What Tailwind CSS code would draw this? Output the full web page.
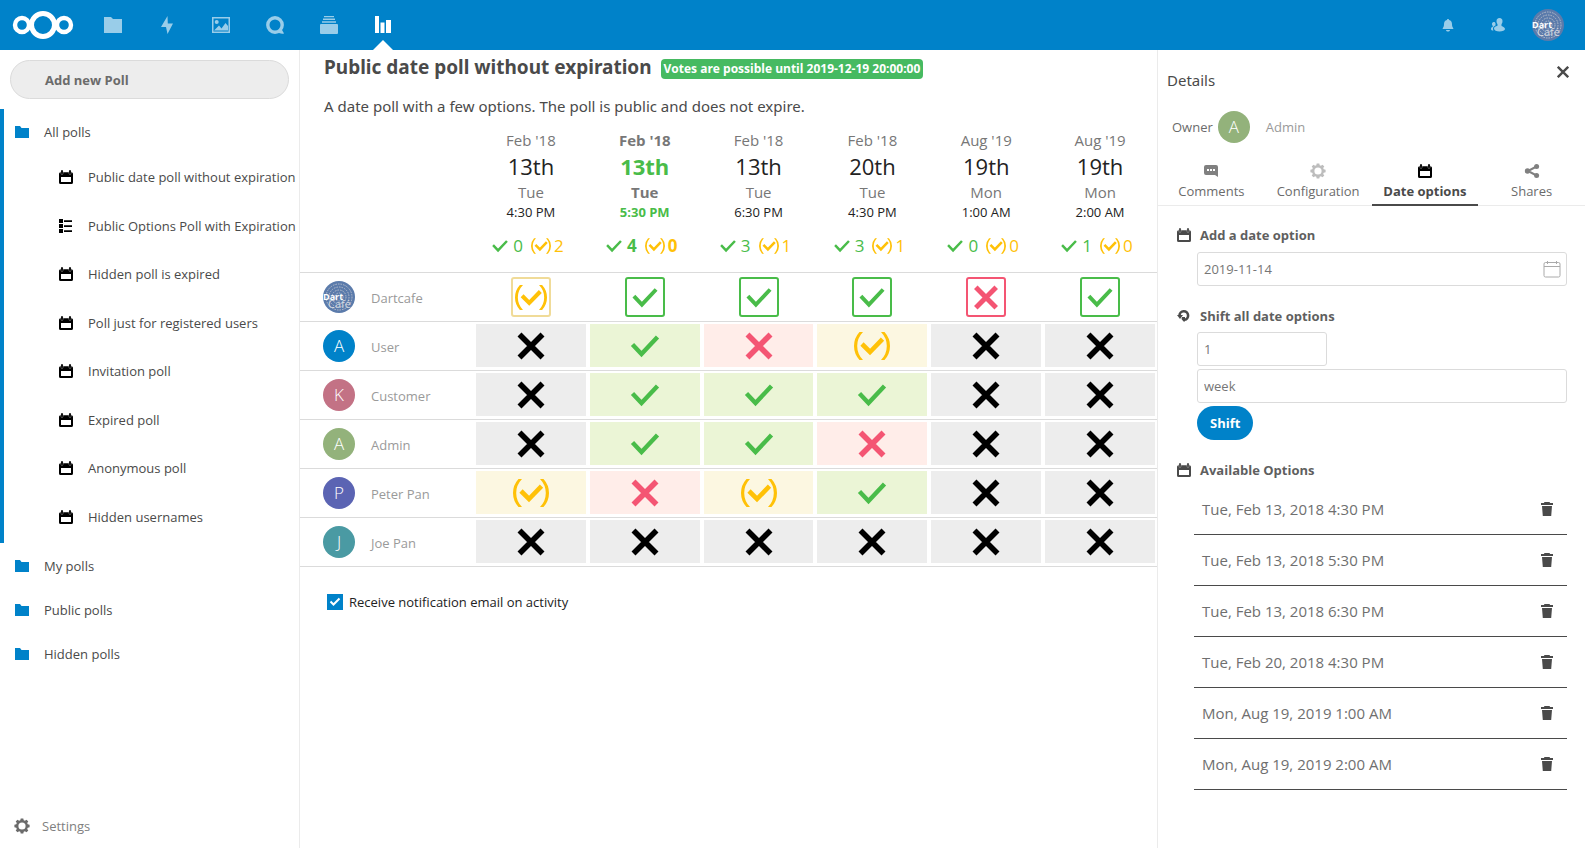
<!DOCTYPE html>
<html lang="en">
<head>
<meta charset="utf-8">
<title>Polls</title>
<script src="https://cdn.jsdelivr.net/npm/@tailwindcss/browser@4"></script>
</head>
<body class="flex min-h-screen flex-col bg-white font-['Open_Sans',sans-serif] text-[13px] leading-5 text-[#4a4a4a]">
<svg class="hidden" aria-hidden="true">
  <symbol id="folder" viewBox="0 0 16 16"><path d="M1 2h5l1.500 2H15v10H1z"/></symbol>
  <symbol id="cal" viewBox="0 0 14 14"><path fill-rule="evenodd" d="M1.600 2.200h10.800Q14 2.200 14 3.800V12.400Q14 14 12.400 14H1.600Q0 14 0 12.400V3.800Q0 2.200 1.600 2.200zM2 7v5h10V7z"/><path fill="none" stroke="#bbb" stroke-width="2.600" stroke-linecap="round" d="M3 1.700v1.600M11 1.700v1.600"/><path fill="none" stroke="currentColor" stroke-width="1.800" stroke-linecap="round" d="M3 1v2.300M11 1v2.300"/></symbol>
  <symbol id="list" viewBox="0 0 14 14"><path d="M0 0h4v4H0zM0 5h4v4H0zM0 10h4v4H0zM5 1.200h8v1.800H5zM5 6.200h8V8H5zM5 11.200h8V13H5z"/></symbol>
  <symbol id="gear" viewBox="0 0 16 16"><path fill-rule="evenodd" d="M6.700.4h2.600l.4 1.900 1.200.5 1.600-1.100 1.800 1.800-1.100 1.600.5 1.200 1.900.4v2.600l-1.900.4-.5 1.200 1.100 1.600-1.800 1.800-1.600-1.100-1.200.5-.4 1.900H6.700l-.4-1.900-1.200-.5-1.600 1.100-1.800-1.800 1.100-1.600-.5-1.200-1.900-.4V6.700l1.900-.4.500-1.200-1.100-1.600 1.800-1.800 1.600 1.100 1.200-.5zM8 4.400a3.600 3.600 0 1 0 0 7.200 3.600 3.600 0 0 0 0-7.200z"/></symbol>
  <symbol id="yes" viewBox="0 0 36 28"><path fill="none" stroke="currentColor" stroke-width="4.400" d="M5.500 12.500l9 9.500L30.500 5"/></symbol>
  <symbol id="no" viewBox="0 0 36 28"><path fill="none" stroke="currentColor" stroke-width="5.600" d="M6.500 2.500l23 23M29.500 2.500l-23 23"/></symbol>
  <symbol id="maybe" viewBox="0 0 36 28"><path fill="none" stroke="currentColor" stroke-width="4.600" d="M8 12l8 8L28.500 7.200"/><path d="M5.500 0H9Q3.200 6 3.200 14T9 28H5.500Q0 22 0 14T5.500 0zM30.500 0H27q5.800 6 5.800 14T27 28h3.500Q36 22 36 14T30.500 0z"/></symbol>
  <symbol id="trash" viewBox="0 0 14 14"><path d="M4.500 0h5l.6 1H13v2H1V1h2.900zM2 4h10l-.8 10H2.800z"/></symbol>
  <symbol id="dart" viewBox="0 0 32 32">
    <circle cx="16" cy="16" r="16" fill="#5b7bab"/>
    <g fill="none" stroke="#b4bccb" stroke-width="1" stroke-dasharray="1.600 1"><circle cx="16" cy="16" r="13"/><circle cx="16" cy="16" r="10"/><circle cx="16" cy="16" r="7"/><circle cx="16" cy="16" r="4"/></g>
    <text x="0" y="19" font-size="9" font-weight="700" fill="#fff">Dart</text>
    <text x="5" y="27" font-size="11" fill="#d5d9e0" font-weight="400">Café</text>
  </symbol>
</svg>

<header class="flex h-[50px] items-center bg-[#0082c9] text-white">
  <a href="#" aria-label="Home" class="ml-3 mr-3">
    <svg class="h-7 w-[62px]" viewBox="0 0 62 28" fill="none" stroke="currentColor"><circle cx="31" cy="14" r="11.500" stroke-width="5"/><circle cx="10" cy="14" r="7" stroke-width="4.400"/><circle cx="52" cy="14" r="7" stroke-width="4.400"/></svg>
  </a>
  <nav class="flex h-full items-center" aria-label="Apps">
    <a href="#" aria-label="Files" class="flex h-full w-[54px] items-center justify-center opacity-60"><svg class="size-5" viewBox="0 0 20 20" fill="currentColor"><path d="M1 2h7l2 2h9v14H1z"/></svg></a>
    <a href="#" aria-label="Activity" class="flex h-full w-[54px] items-center justify-center opacity-60"><svg class="size-5" viewBox="0 0 20 20" fill="currentColor"><path d="M10.500 1L4 12h5L10.500 19 16 8.500h-5.200z"/></svg></a>
    <a href="#" aria-label="Photos" class="flex h-full w-[54px] items-center justify-center opacity-60"><svg class="size-5" viewBox="0 0 20 20" fill="currentColor"><path fill-rule="evenodd" d="M1 2h18v16H1zM2.500 3.500v13h15v-13z"/><circle cx="5.700" cy="7" r="2"/><path d="M3 15.500l5-5 2.500 3 4-5.500 2.500 3v4.500z"/></svg></a>
    <a href="#" aria-label="Talk" class="flex h-full w-[54px] items-center justify-center opacity-60"><svg class="size-5" viewBox="0 0 20 20"><circle cx="10" cy="10" r="7.200" fill="none" stroke="currentColor" stroke-width="3.400"/><path fill="currentColor" d="M12 17l4-4 3 5.500q-3 1-7-1.500z"/></svg></a>
    <a href="#" aria-label="Deck" class="flex h-full w-[54px] items-center justify-center opacity-60"><svg class="size-5" viewBox="0 0 20 20" fill="currentColor"><path d="M5 1h10v1.300H5zM4 3.600h12v1.400H4zM3 6.300h14v1.500H3z"/><rect x="1" y="9" width="18" height="10" rx="1"/></svg></a>
    <a href="#" aria-label="Polls" aria-current="page" class="relative flex h-full w-[54px] items-center justify-center"><svg class="size-5" viewBox="0 0 20 20" fill="currentColor"><path d="M2 1h4v17H2zM7.500 7.500h4V18h-4zM13 5h5v13h-5z"/></svg>
      <svg class="absolute bottom-0 left-[17px] h-[10px] w-5" viewBox="0 0 20 10" fill="#fff"><path d="M10 0l10 10H0z"/></svg></a>
  </nav>
  <div class="ml-auto mr-[21px] flex items-center">
    <button aria-label="Notifications" class="flex w-[50px] justify-center opacity-60"><svg class="size-4" viewBox="0 0 16 16" fill="currentColor"><path d="M8 2c-.8 0-1 .5-1 1-2.200.5-3 2.300-3 4.300C4 10 3 10.500 2.500 12h11C13 10.500 12 10 12 7.300 12 5.300 11.200 3.500 9 3c0-.5-.2-1-1-1zM6 13c.2 1 1 1.500 2 1.500s1.800-.5 2-1.500z"/></svg></button>
    <button aria-label="Contacts" class="flex w-[50px] justify-center opacity-60"><svg class="size-4" viewBox="0 0 16 16" fill="currentColor"><path d="M9.500 1C7.500 1 6.500 2.400 6.500 4c0 1.500.5 2.500 1 3.200v1.600C5.500 9.600 4 10 4 11.500c0 2 2.500 3 5.500 3s5.500-1 5.500-2.500-2-2.200-3.500-3V7.200c.6-.7 1-1.700 1-3.200 0-1.600-1-3-3-3z"/><path d="M3.700 5C2.500 5 2 6 2 7s.4 1.500.8 2v.8C1.500 10.300 1 10.800 1 12c0 1 1 1.500 2.500 1.600C3 12.800 3 12 3 11.500c0-1.500 1-2.300 2.500-3V6.200C5.200 5.500 4.600 5 3.700 5z"/></svg></button>
    <button aria-label="Account" class="ml-[9px]"><svg class="size-8"><use href="#dart"/></svg></button>
  </div>
</header>

<div class="flex flex-1">
  <aside class="flex w-[300px] shrink-0 flex-col border-r border-[#ebebeb]">
    <button class="mx-[10px] mt-[10px] h-[39px] rounded-full border border-[#dbdbdb] bg-[#ededed] pl-[34px] text-left font-bold text-[#6b6b6b]">Add new Poll</button>
    <nav class="mt-[10px]" aria-label="Polls">
      <div class="border-l-4 border-[#0082c9]">
        <a href="#" class="flex h-11 items-center gap-[14px] pl-[10px] pt-px"><svg class="size-4 fill-[#0082c9]"><use href="#folder"/></svg>All polls</a>
        <ul id="polls" class="grid h-[390px] auto-rows-fr pb-[2px]"></ul>
      </div>
      <a href="#" class="flex h-11 items-center gap-[14px] pl-[14px] pt-px"><svg class="size-4 fill-[#0082c9]"><use href="#folder"/></svg>My polls</a>
      <a href="#" class="flex h-11 items-center gap-[14px] pl-[14px] pt-px"><svg class="size-4 fill-[#0082c9]"><use href="#folder"/></svg>Public polls</a>
      <a href="#" class="flex h-11 items-center gap-[14px] pl-[14px] pt-px"><svg class="size-4 fill-[#0082c9]"><use href="#folder"/></svg>Hidden polls</a>
    </nav>
    <button class="mt-auto flex h-11 items-center gap-3 pl-[14px] text-[#808080]"><svg class="size-4 fill-[#6b6b6b]"><use href="#gear"/></svg>Settings</button>
  </aside>

  <main class="min-w-0 flex-1">
    <div class="flex items-center gap-[9px] pl-6 pt-[5px]">
      <h1 class="font-['Noto_Sans',sans-serif] text-[19px] font-bold leading-6">Public date poll without expiration</h1>
      <span class="mt-1 h-5 rounded-sm bg-[#46ba61] px-[3px] text-[12px] font-bold leading-5 text-white">Votes are possible until 2019-12-19 20:00:00</span>
    </div>
    <p class="mt-[15px] pl-6 font-['Noto_Sans',sans-serif] text-[15px] leading-6">A date poll with a few options. The poll is public and does not expire.</p>
    <table class="mt-[10px] w-full table-fixed border-collapse">
      <thead><tr id="dates" class="border-b border-[#dbdbdb]"><td class="w-[174px]"></td></tr></thead>
      <tbody id="votes"></tbody>
    </table>
    <div class="flex items-center gap-[6px] pl-[27px] pt-[25px] text-[#222]">
      <span class="relative flex size-4">
        <input id="notify" type="checkbox" checked class="size-4 appearance-none bg-[#0082c9]">
        <svg class="pointer-events-none absolute inset-0 size-4 text-white" viewBox="0 0 16 16"><path fill="none" stroke="currentColor" stroke-width="2" d="M3.500 7.500l3 3 6-6"/></svg>
      </span>
      <label for="notify">Receive notification email on activity</label>
    </div>
  </main>

  <aside class="w-[428px] shrink-0 border-l border-[#ebebeb]">
    <div class="flex items-start justify-between pl-[9px] pr-4 pt-4">
      <h2 class="pt-[2px] font-['Noto_Sans',sans-serif] text-[15px] leading-6">Details</h2>
      <button aria-label="Close" class="text-[#4a4a4a]"><svg class="size-3" viewBox="0 0 12 12"><path fill="none" stroke="currentColor" stroke-width="2.400" d="M.8.8l10.400 10.400M11.200.8L.8 11.200"/></svg></button>
    </div>
    <div class="mt-[19px] flex items-center pl-[14px]">
      <span class="text-[#6b6b6b]">Owner</span>
      <span class="ml-[5px] flex size-8 items-center justify-center rounded-full bg-[#93b27b] text-[17px] font-light text-white">A</span>
      <span class="ml-4 text-[#9a9a9a]">Admin</span>
    </div>
    <div role="tablist" class="mt-5 grid grid-cols-4 border-b border-[#ebebeb] text-[#6b6b6b]">
      <button role="tab" class="flex flex-col items-center gap-[2px] pb-[3px]"><svg class="size-4 text-[#808080]" viewBox="0 0 16 16" fill="currentColor"><path fill-rule="evenodd" d="M3 2h10q2 0 2 2v10l-3-2H3q-2 0-2-2V4q0-2 2-2zM4 6v2h2V6zM7 6v2h2V6zM10 6v2h2V6z"/></svg>Comments</button>
      <button role="tab" class="flex flex-col items-center gap-[2px] pb-[3px]"><svg class="size-4 fill-[#bdbdbd]"><use href="#gear"/></svg>Configuration</button>
      <button role="tab" aria-selected="true" class="-mb-px flex flex-col items-center gap-[2px] border-b-2 border-[#4a4a4a] pb-[3px] font-bold text-[#4a4a4a]"><svg class="m-px size-[14px] fill-black text-black"><use href="#cal"/></svg>Date options</button>
      <button role="tab" class="flex flex-col items-center gap-[2px] pb-[3px]"><svg class="size-4 text-[#808080]" viewBox="0 0 16 16" fill="currentColor"><path fill="none" stroke="currentColor" stroke-width="2" d="M12.500 3.500L4 8l8.500 4.500"/><circle cx="12.600" cy="3.400" r="2.500"/><circle cx="3.500" cy="8" r="2.700"/><circle cx="12.600" cy="12.600" r="2.500"/></svg>Shares</button>
    </div>
    <section class="pl-[39px] pr-[18px] pt-[19px]">
      <label for="date" class="-ml-5 flex items-center gap-[9px] font-bold text-[#5f5f5f]"><svg class="size-[14px] fill-[#4a4a4a] text-[#4a4a4a]"><use href="#cal"/></svg>Add a date option</label>
      <div class="relative mt-[7px]">
        <input id="date" type="text" value="2019-11-14" class="h-[34px] w-full rounded-[3px] border border-[#dbdbdb] px-[6px] text-[#767676]">
        <svg class="pointer-events-none absolute right-[6px] top-2 h-[18px] w-[18px]" viewBox="0 0 18 18" fill="none" stroke="#aaa"><rect x="1" y="2.500" width="16" height="14.500" rx="1.500"/><path d="M1 6.500h16M4.500 1v3M13.500 1v3"/></svg>
      </div>
      <label for="amount" class="-ml-5 mt-5 flex items-center gap-[9px] font-bold text-[#5f5f5f]"><svg class="size-[14px]" viewBox="0 0 14 14" fill="none" stroke="#4a4a4a"><path stroke-width="2.600" d="M2.500 6.500a4.300 4.300 0 1 1 5 4.300"/><path fill="#4a4a4a" stroke="none" d="M0 6h6l-3 4zM5 8h3v4.500H6.500L4.500 10z"/></svg>Shift all date options</label>
      <input id="amount" type="text" inputmode="numeric" value="1" class="mt-[6px] block h-[34px] w-[130px] rounded-[3px] border border-[#dbdbdb] px-[6px] text-[#767676]">
      <select aria-label="Unit" class="mt-[3px] block h-[34px] w-full appearance-none rounded-[3px] border border-[#dbdbdb] bg-white px-[6px] text-[#767676]"><option>week</option></select>
      <button class="mt-[3px] h-[34px] rounded-full bg-[#0082c9] px-[13px] font-bold text-white">Shift</button>
      <h3 class="-ml-5 mt-5 flex items-center gap-[9px] font-bold text-[#5f5f5f]"><svg class="size-[14px] fill-[#4a4a4a] text-[#4a4a4a]"><use href="#cal"/></svg>Available Options</h3>
      <ul id="options" class="-ml-[3px] mt-1 text-[15px] text-[#6f6f6f]"></ul>
    </section>
  </aside>
</div>

<script>
const polls = ['Public date poll without expiration', 'Public Options Poll with Expiration', 'Hidden poll is expired', 'Poll just for registered users', 'Invitation poll', 'Expired poll', 'Anonymous poll', 'Hidden usernames'];
document.getElementById('polls').innerHTML = polls.map((name, i) =>
  `<li class="flex"><a href="#" class="flex flex-1 items-center gap-[15px] pl-[55px]"><svg class="size-[14px] fill-black text-black"><use href="#${i === 1 ? 'list' : 'cal'}"/></svg>${name}</a></li>`).join('');

const dates = [["Feb '18", '13th', 'Tue', '4:30 PM', 0, 2], ["Feb '18", '13th', 'Tue', '5:30 PM', 4, 0], ["Feb '18", '13th', 'Tue', '6:30 PM', 3, 1], ["Feb '18", '20th', 'Tue', '4:30 PM', 3, 1], ["Aug '19", '19th', 'Mon', '1:00 AM', 0, 0], ["Aug '19", '19th', 'Mon', '2:00 AM', 1, 0]];
document.getElementById('dates').innerHTML += dates.map(([month, day, weekday, time, yes, maybe], i) => {
  const best = i === 1;
  return `<th scope="col" class="${best ? 'p-0 font-bold' : 'p-0 font-normal'}">
    <div class="text-[15px] leading-6 text-[#777]">${month}</div>
    <div class="${best ? 'text-[22px] leading-7 text-[#49bc49]' : 'text-[22px] leading-7 text-[#222]'}">${day}</div>
    <div class="text-[15px] leading-6 text-[#777]">${weekday}</div>
    <div class="${best ? 'leading-4 text-[#49bc49]' : 'leading-4 text-[#222]'}">${time}</div>
    <div class="flex h-[52px] items-center justify-center pr-2 text-[17px]">
      <svg class="h-4 w-5 text-[#49bc49]"><use href="#yes"/></svg><span class="ml-[3px] text-[#49bc49]">${yes}</span>
      <svg class="ml-2 h-4 w-5 fill-[#ffc107] text-[#ffc107]"><use href="#maybe"/></svg><span class="ml-[3px] text-[#ffc107]">${maybe}</span>
    </div></th>`;
}).join('');

const avatars = { User: ['A', 'bg-[#0082c9]'], Customer: ['K', 'bg-[#c37285]'], Admin: ['A', 'bg-[#93b27b]'], 'Peter Pan': ['P', 'bg-[#5b64b3]'], 'Joe Pan': ['J', 'bg-[#4a9aa3]'] };
const rows = [['Dartcafe', 'myyyny'], ['User', '-ynm--'], ['Customer', '-yyy--'], ['Admin', '-yyn--'], ['Peter Pan', 'mnmy--'], ['Joe Pan', '------']];
const cell = { y: ['yes', 'bg-[#ebf5d6] text-[#49bc49]', 'Yes'], n: ['no', 'bg-[#ffede9] text-[#f45573]', 'No'], m: ['maybe', 'bg-[#fcf7e1] text-[#ffc107]', 'Maybe'], '-': ['no', 'bg-[#ededed] text-black', 'No vote'] };
const box = { y: 'border-[#49bc49] text-[#49bc49]', n: 'border-[#f45573] text-[#f45573]', m: 'border-[#f0db98] text-[#ffc107]' };
document.getElementById('votes').innerHTML = rows.map(([name, votes]) => {
  const own = name === 'Dartcafe';
  const avatar = own ? '<svg class="size-8"><use href="#dart"/></svg>'
    : `<span class="flex size-8 items-center justify-center rounded-full text-[17px] font-light text-white ${avatars[name][1]}">${avatars[name][0]}</span>`;
  return `<tr class="h-[49px] border-b border-[#dbdbdb]"><th scope="row" class="p-0 pl-[23px] font-normal text-[#9a9a9a]"><div class="flex items-center gap-4">${avatar}<span class="pt-[2px]">${name}</span></div></th>` +
    [...votes].map(v => own
      ? `<td class="p-0"><button aria-label="${cell[v][2]}" class="mx-auto flex size-10 items-center justify-center rounded-[3px] border-2 ${box[v]}"><svg class="h-[25px] w-8 fill-current"><use href="#${cell[v][0]}"/></svg></button></td>`
      : `<td class="p-0 pb-px"><div aria-label="${cell[v][2]}" class="mx-[2px] flex h-[43px] items-center justify-center ${cell[v][1]}"><svg class="h-7 w-9 fill-current"><use href="#${cell[v][0]}"/></svg></div></td>`).join('') + '</tr>';
}).join('');

const options = ['Tue, Feb 13, 2018 4:30 PM', 'Tue, Feb 13, 2018 5:30 PM', 'Tue, Feb 13, 2018 6:30 PM', 'Tue, Feb 20, 2018 4:30 PM', 'Mon, Aug 19, 2019 1:00 AM', 'Mon, Aug 19, 2019 2:00 AM'];
document.getElementById('options').innerHTML = options.map(text =>
  `<li class="flex h-[51px] items-center justify-between border-b border-[#4a4a4a] pl-2 pr-[13px]">${text}<button aria-label="Delete ${text}"><svg class="size-[14px] fill-[#4a4a4a]"><use href="#trash"/></svg></button></li>`).join('');
</script>
</body>
</html>
